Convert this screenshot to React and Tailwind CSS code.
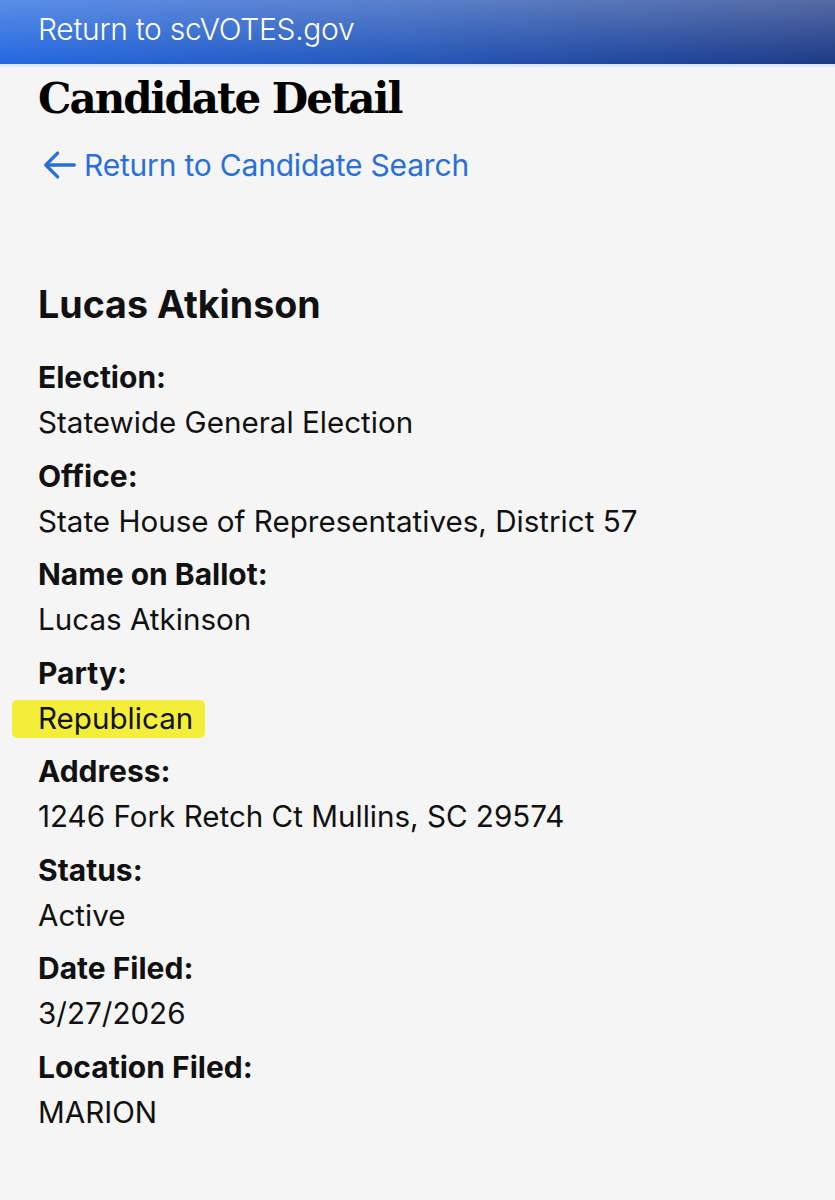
import React from "react";

const rows = [
  ["Election:", "Statewide General Election"],
  ["Office:", "State House of Representatives, District 57"],
  ["Name on Ballot:", "Lucas Atkinson"],
  ["Party:", "Republican"],
  ["Address:", "1246 Fork Retch Ct Mullins, SC 29574"],
  ["Status:", "Active"],
  ["Date Filed:", "3/27/2026"],
  ["Location Filed:", "MARION"],
];

export default function App() {
  return (
    <div className="min-h-[1200px] bg-[#f5f5f5] text-[#111]" style={{ fontFamily: "Inter, 'Noto Sans', sans-serif" }}>
      <div className="relative h-[67px] bg-gradient-to-r from-[#2468e0] via-[#2456b8] to-[#1d3a86] border-b-[3px] border-[#dce8f7]">
        <div className="absolute inset-0 bg-gradient-to-b from-white/25 to-transparent" />
        <div className="relative flex h-full items-center pl-[38px] pb-[6px] text-[30px] font-light text-white tracking-[-0.3px]">
          Return to scVOTES.gov
        </div>
      </div>
      <div className="px-[38px]">
        <h1 className="mt-[6px] text-[42px] font-bold leading-[52px] text-black tracking-[-2px]" style={{ fontFamily: "'DejaVu Serif', 'Liberation Serif', serif" }}>
          Candidate Detail
        </h1>
        <div className="mt-[20px] flex items-center text-[30px] text-[#2a6fd8] leading-[40px] tracking-[-0.2px]">
          <svg width="38" height="38" viewBox="0 0 24 24" fill="none" stroke="currentColor" strokeWidth="2.1" strokeLinecap="round" strokeLinejoin="round" className="ml-[3px] mr-[5px]">
            <path d="M21 12H3.5" />
            <path d="M10.5 4.5L3 12l7.5 7.5" />
          </svg>
          Return to Candidate Search
        </div>
        <h2 className="mt-[96px] text-[37.6px] font-bold leading-[48px]">Lucas Atkinson</h2>
        <div className="mt-[26px] flex flex-col gap-[8.5px]">
          {rows.map(([label, value]) => (
            <div key={label} className="flex flex-col">
              <div className="text-[30px] font-bold leading-[45px]">{label}</div>
              <div className="text-[29.6px] leading-[45px]">
                {label === "Party:" ? (
                  <span className="relative inline-block">
                    <span className="absolute left-[-26px] right-[-12px] top-[4px] bottom-[3px] rounded-[5px] bg-[#f3ee3a] blur-[0.5px]" />
                    <span className="relative">{value}</span>
                  </span>
                ) : (
                  value
                )}
              </div>
            </div>
          ))}
        </div>
      </div>
    </div>
  );
}
